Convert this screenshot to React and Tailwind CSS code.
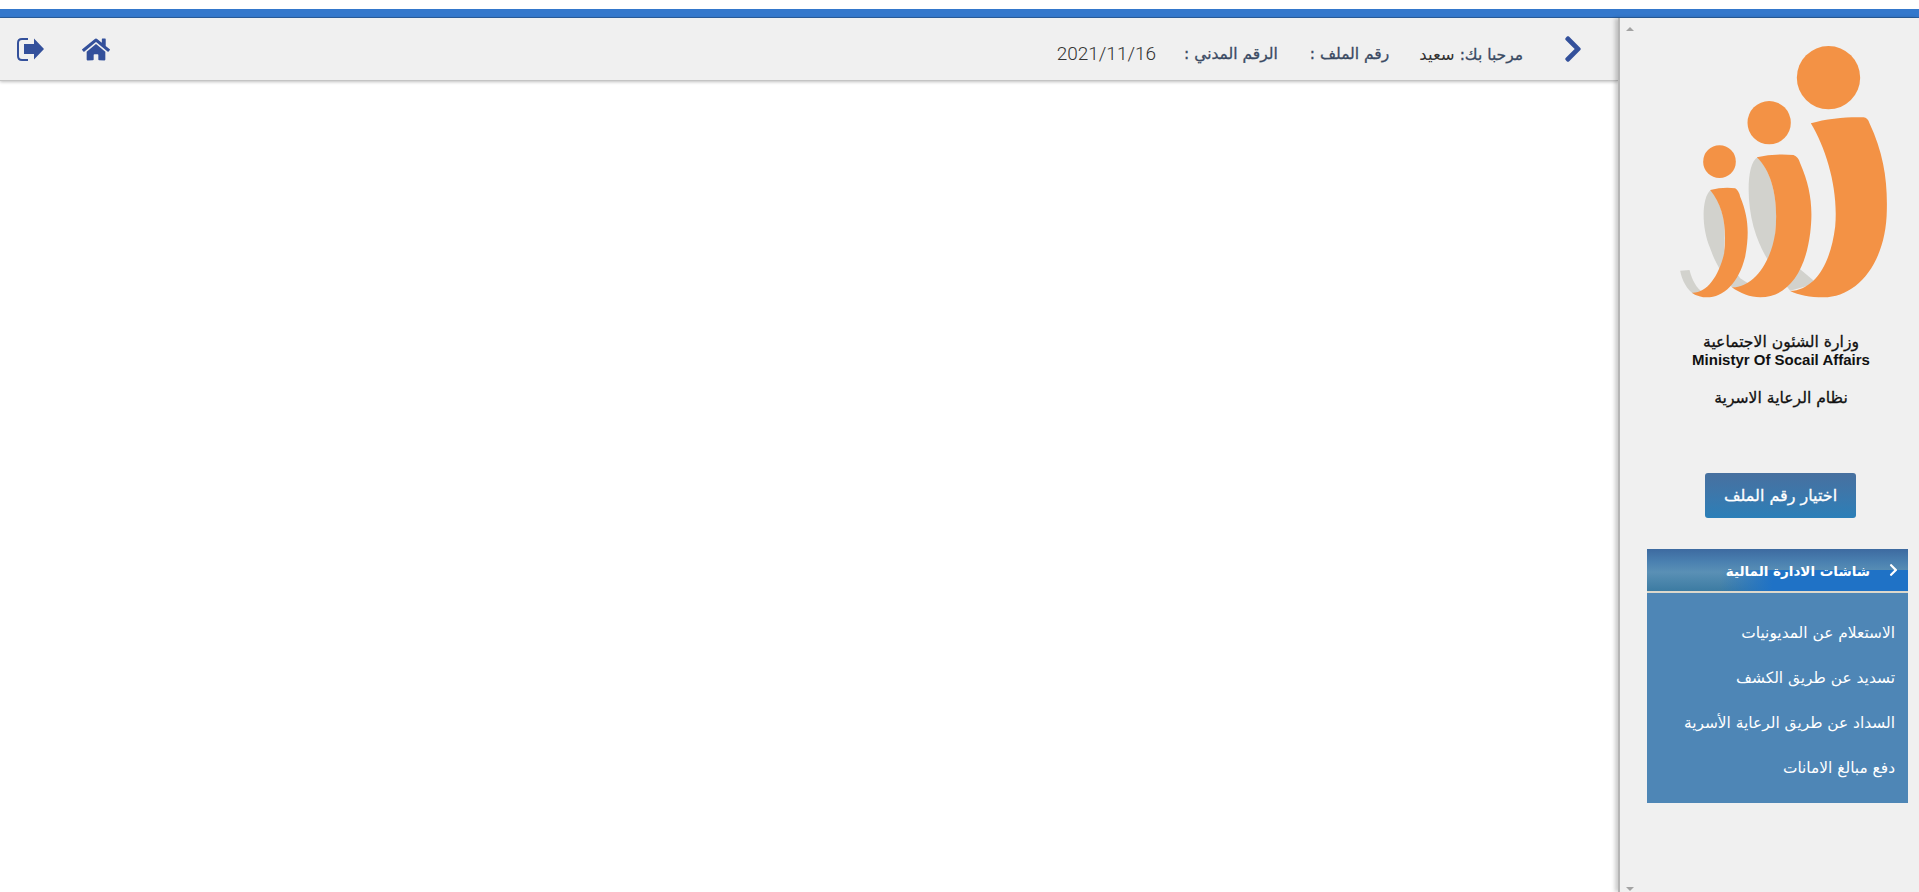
import React from 'react';
import { FaChevronRight, FaHome } from 'react-icons/fa';

const arabic = "font-['DejaVu_Sans','Noto_Sans',sans-serif]";
const medium = "font-normal [-webkit-text-stroke:0.3px_currentColor]";

function Logo() {
  return (
    <svg viewBox="240 138 620 756" className="w-[207px] h-[252px]">
      <g fill="#d2d2cd">
        <path d="M240 812 L268 810 C276 840 288 865 312 880 L285 885 C260 870 245 840 240 812Z" />
        <path d="M332 570 C305 590 302 680 330 745 C345 790 372 830 395 862 L470 866 L420 835 C395 800 378 770 372 745 C378 670 368 615 332 570Z" />
        <path d="M472 472 C440 490 438 600 460 680 C485 770 530 820 570 872 L650 850 L600 808 C560 790 535 760 525 700 C535 610 520 520 472 472Z" />
      </g>
      <g fill="#f39245">
        <circle cx="685" cy="233" r="95" />
        <circle cx="507" cy="368" r="65" />
        <circle cx="358" cy="485" r="49" />
        <path d="M632 370 C680 355 750 350 790 352 Q803 353 808 370 C850 460 862 540 860 630 C858 790 770 892 670 892 C630 892 595 885 570 873 C640 870 690 800 705 680 C715 570 680 450 632 370Z" />
        <path d="M470 472 Q520 460 580 465 Q595 470 600 490 C630 560 640 620 630 700 C615 820 560 892 480 892 C450 892 420 880 395 862 C450 865 510 800 525 700 C535 610 520 520 470 472Z" />
        <path d="M330 570 Q370 560 405 565 Q415 570 420 590 C445 650 448 700 435 770 C415 850 370 892 320 892 C305 892 290 888 275 878 C320 880 355 830 372 760 C380 680 370 620 330 570Z" />
      </g>
    </svg>
  );
}

function LogoutIcon() {
  return (
    <svg viewBox="0 0 27 23" className="w-[27px] h-[23px]">
      <path d="M11 1 H5 Q1 1 1 5 V18 Q1 22 5 22 H11" fill="none" stroke="currentColor" strokeWidth="2" />
      <path d="M7 6 H17 V0.5 L27 11 L17 21.5 V16 H7 Z" fill="currentColor" />
    </svg>
  );
}

function Header() {
  return (
    <header className="h-[63px] bg-[#f0f0f0] border-b border-[#c4c4c4] shadow-[0_1px_3px_rgba(0,0,0,0.25)] flex items-center justify-between pl-[17px] pr-[35px] text-[#3a4a63]">
      <div className="flex items-center gap-[38px] text-[#33509b]">
        <LogoutIcon />
        <FaHome className="w-[28px] h-[25px]" />
      </div>
      <div className="flex items-center">
        <div className={`flex items-center mt-[12px] ${arabic}`}>
          <span className="text-[19px] font-light text-[#333] font-['Roboto',sans-serif] mr-[28px] -mt-[2px]">2021/11/16</span>
          <span dir="rtl" className={`text-[15.5px] mr-[32px] ${medium}`}>الرقم المدني :</span>
          <span dir="rtl" className={`text-[15.5px] mr-[30px] ${medium}`}>رقم الملف :</span>
          <span dir="rtl" className={`text-[15.5px] ${medium}`}>مرحبا بك: <span className="text-[16.5px] text-[#333] [-webkit-text-stroke:0px]">سعيد</span></span>
        </div>
        <FaChevronRight className="w-[20px] h-[30px] text-[#33509b] ml-[40px]" />
      </div>
    </header>
  );
}

function Sidebar() {
  const links = [
    'الاستعلام عن المديونيات',
    'تسديد عن طريق الكشف',
    'السداد عن طريق الرعاية الأسرية',
    'دفع مبالغ الامانات',
  ];
  return (
    <aside className="relative w-[301px] shrink-0 bg-[#f0f0f0] border-l-2 border-[#b5b5b5] shadow-[-3px_0_4px_rgba(0,0,0,0.2)] flex flex-col items-center">
      <div className="absolute left-[6px] top-[9px] w-0 h-0 border-x-[4px] border-x-transparent border-b-[4px] border-b-[#a3a3a3]" />
      <div className="absolute left-[6px] bottom-[1px] w-0 h-0 border-x-[4px] border-x-transparent border-t-[4px] border-t-[#a3a3a3]" />
      <div className="mt-[28px] ml-[28px] h-[252px]">
        <Logo />
      </div>
      <div className={`mt-[35px] ml-[23px] text-center text-[#111] ${arabic}`}>
        <div dir="rtl" className={`text-[15.6px] leading-[18px] ${medium}`}>وزارة الشئون الاجتماعية</div>
        <div className="text-[15px] leading-[18px] font-bold font-['Liberation_Sans',sans-serif]">Ministyr Of Socail Affairs</div>
        <div dir="rtl" className={`text-[15.6px] leading-[18px] mt-[20px] ${medium}`}>نظام الرعاية الاسرية</div>
      </div>
      <button className={`mt-[66px] ml-[22px] w-[151px] h-[45px] rounded-[3px] bg-gradient-to-b from-[#47709f] to-[#2a7fb8] text-white text-[16px] ${medium} ${arabic}`}>
        اختيار رقم الملف
      </button>
      <section dir="rtl" className={`mt-[31px] w-[261px] ml-[16px] ${arabic}`}>
        <div className="h-[44px] [background:linear-gradient(90deg,transparent_28%,#1f72c6_48%)_bottom/100%_50%_no-repeat,linear-gradient(180deg,#3d6aa0_0%,#4a80b0_30%,#5a90b5_55%,#3c7ba2_100%)] border-b-2 border-[#dcd8cc] flex items-center pr-[10px] text-white">
          <FaChevronRight className="w-[9px] h-[14px]" />
          <span className="mr-[19px] pt-[3px] text-[13.5px] font-bold">شاشات الادارة المالية</span>
        </div>
        <ul className="h-[210px] bg-[#4e86b6] pt-[18px] pr-[13px] text-white text-[15.4px]">
          {links.map((l) => (
            <li key={l} className="h-[45px] leading-[45px]">{l}</li>
          ))}
        </ul>
      </section>
    </aside>
  );
}

export default function App() {
  return (
    <div className="h-[892px] overflow-hidden bg-white flex flex-col">
      <div className="h-[9px] bg-white shrink-0" />
      <div className="h-[9px] bg-[#3478cc] shrink-0 border-b border-[#2a5f9e]" />
      <div className="flex flex-1 min-h-0">
        <main className="flex-1 min-w-0 bg-white">
          <Header />
        </main>
        <Sidebar />
      </div>
    </div>
  );
}
